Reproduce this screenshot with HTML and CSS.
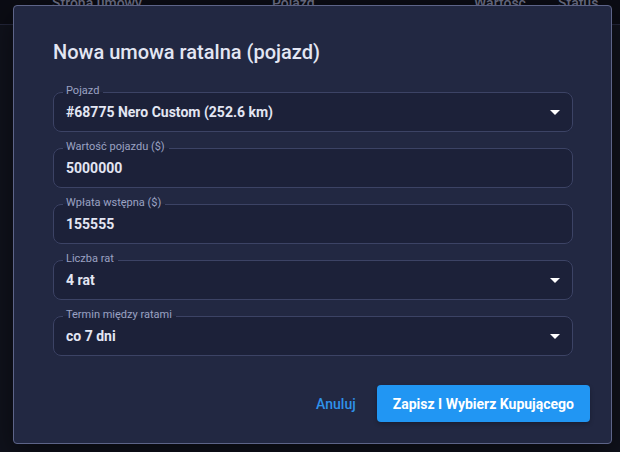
FILE: index.html
```html
<!DOCTYPE html>
<html lang="pl">
<head>
<meta charset="utf-8">
<title>Nowa umowa ratalna</title>
<link rel="stylesheet" href="styles.css">
</head>
<body>
<div class="page">
  <div class="table-head">
    <div class="th th-party">Strona umowy</div>
    <div class="th th-vehicle">Pojazd</div>
    <div class="th th-value">Wartość</div>
    <div class="th th-status">Status</div>
  </div>
</div>

<div class="dialog" role="dialog">
  <h2 class="dialog-title">Nowa umowa ratalna (pojazd)</h2>
  <div class="fields">
    <fieldset class="field">
      <legend>Pojazd</legend>
      <div class="field-row">
        <span class="value">#68775 Nero Custom (252.6 km)</span>
        <svg class="caret" width="10" height="5" viewBox="0 0 10 5"><path d="M0 0L5 5L10 0Z" fill="#ffffff"/></svg>
      </div>
    </fieldset>
    <fieldset class="field">
      <legend>Wartość pojazdu ($)</legend>
      <div class="field-row"><span class="value">5000000</span></div>
    </fieldset>
    <fieldset class="field">
      <legend>Wpłata wstępna ($)</legend>
      <div class="field-row"><span class="value">155555</span></div>
    </fieldset>
    <fieldset class="field">
      <legend>Liczba rat</legend>
      <div class="field-row">
        <span class="value">4 rat</span>
        <svg class="caret" width="10" height="5" viewBox="0 0 10 5"><path d="M0 0L5 5L10 0Z" fill="#ffffff"/></svg>
      </div>
    </fieldset>
    <fieldset class="field">
      <legend>Termin między ratami</legend>
      <div class="field-row">
        <span class="value">co 7 dni</span>
        <svg class="caret" width="10" height="5" viewBox="0 0 10 5"><path d="M0 0L5 5L10 0Z" fill="#ffffff"/></svg>
      </div>
    </fieldset>
  </div>
  <div class="actions">
    <button class="btn-text">Anuluj</button>
    <button class="btn-primary">Zapisz I Wybierz Kupującego</button>
  </div>
</div>
</body>
</html>
```

FILE: styles.css
```css
* { box-sizing: border-box; }

html, body {
  margin: 0;
  padding: 0;
  width: 620px;
  height: 452px;
  overflow: hidden;
  background: #10121c;
  font-family: Roboto, "Noto Sans", "Liberation Sans", sans-serif;
}

.page {
  width: 620px;
  height: 452px;
}

.table-head {
  height: 25px;
  background: #0b0c14;
  border-bottom: 1px solid #23263a;
  display: flex;
  align-items: flex-start;
  overflow: hidden;
}

.th {
  margin-top: -5px;
  font-size: 14px;
  line-height: 16px;
  font-weight: 500;
  color: #6b6f86;
  white-space: nowrap;
}

.th-party { margin-left: 52px; width: 220px; }
.th-vehicle { width: 202px; }
.th-value { width: 84px; }
.th-status { width: 62px; }

.dialog {
  position: absolute;
  left: 13px;
  top: 5px;
  width: 599px;
  height: 439px;
  background: #222842;
  border: 1px solid #5d6488;
  border-radius: 4px;
  box-shadow: 0 10px 30px rgba(0, 0, 0, 0.5);
  display: flex;
  flex-direction: column;
}

.dialog-title {
  margin: 34px 38px 0 39px;
  font-size: 20px;
  line-height: 24px;
  font-weight: 500;
  color: #e3e6f3;
}

.fields {
  margin: 21px 38px 0 39px;
  display: flex;
  flex-direction: column;
  gap: 9px;
}

.field {
  margin: 0;
  padding: 0 12px 7px 12px;
  min-width: 0;
  border: 1px solid #3c4365;
  border-radius: 8px;
  background: #1c2139;
}

.field legend {
  margin-left: -3px;
  padding: 0 4px 4px 3px;
  font-size: 11px;
  line-height: 11px;
  color: #9ba2c2;
}

.field-row {
  height: 24px;
  display: flex;
  align-items: center;
  justify-content: space-between;
}

.value {
  font-size: 14px;
  font-weight: 700;
  color: #e3e6f3;
  white-space: nowrap;
}

.caret {
  display: block;
  flex: none;
}

.actions {
  margin-top: 29px;
  padding: 0 21px;
  display: flex;
  justify-content: flex-end;
  align-items: center;
  gap: 13px;
}

.btn-text {
  background: none;
  border: none;
  padding: 0 8px;
  height: 37px;
  font-family: inherit;
  font-size: 14px;
  font-weight: 500;
  color: #2f92ea;
  cursor: pointer;
}

.btn-primary {
  height: 37px;
  padding: 0 16px;
  border: none;
  border-radius: 4px;
  background: #2196f3;
  color: #ffffff;
  font-family: inherit;
  font-size: 14px;
  font-weight: 700;
  cursor: pointer;
  box-shadow: 0 2px 4px rgba(0, 0, 0, 0.25);
}
```
